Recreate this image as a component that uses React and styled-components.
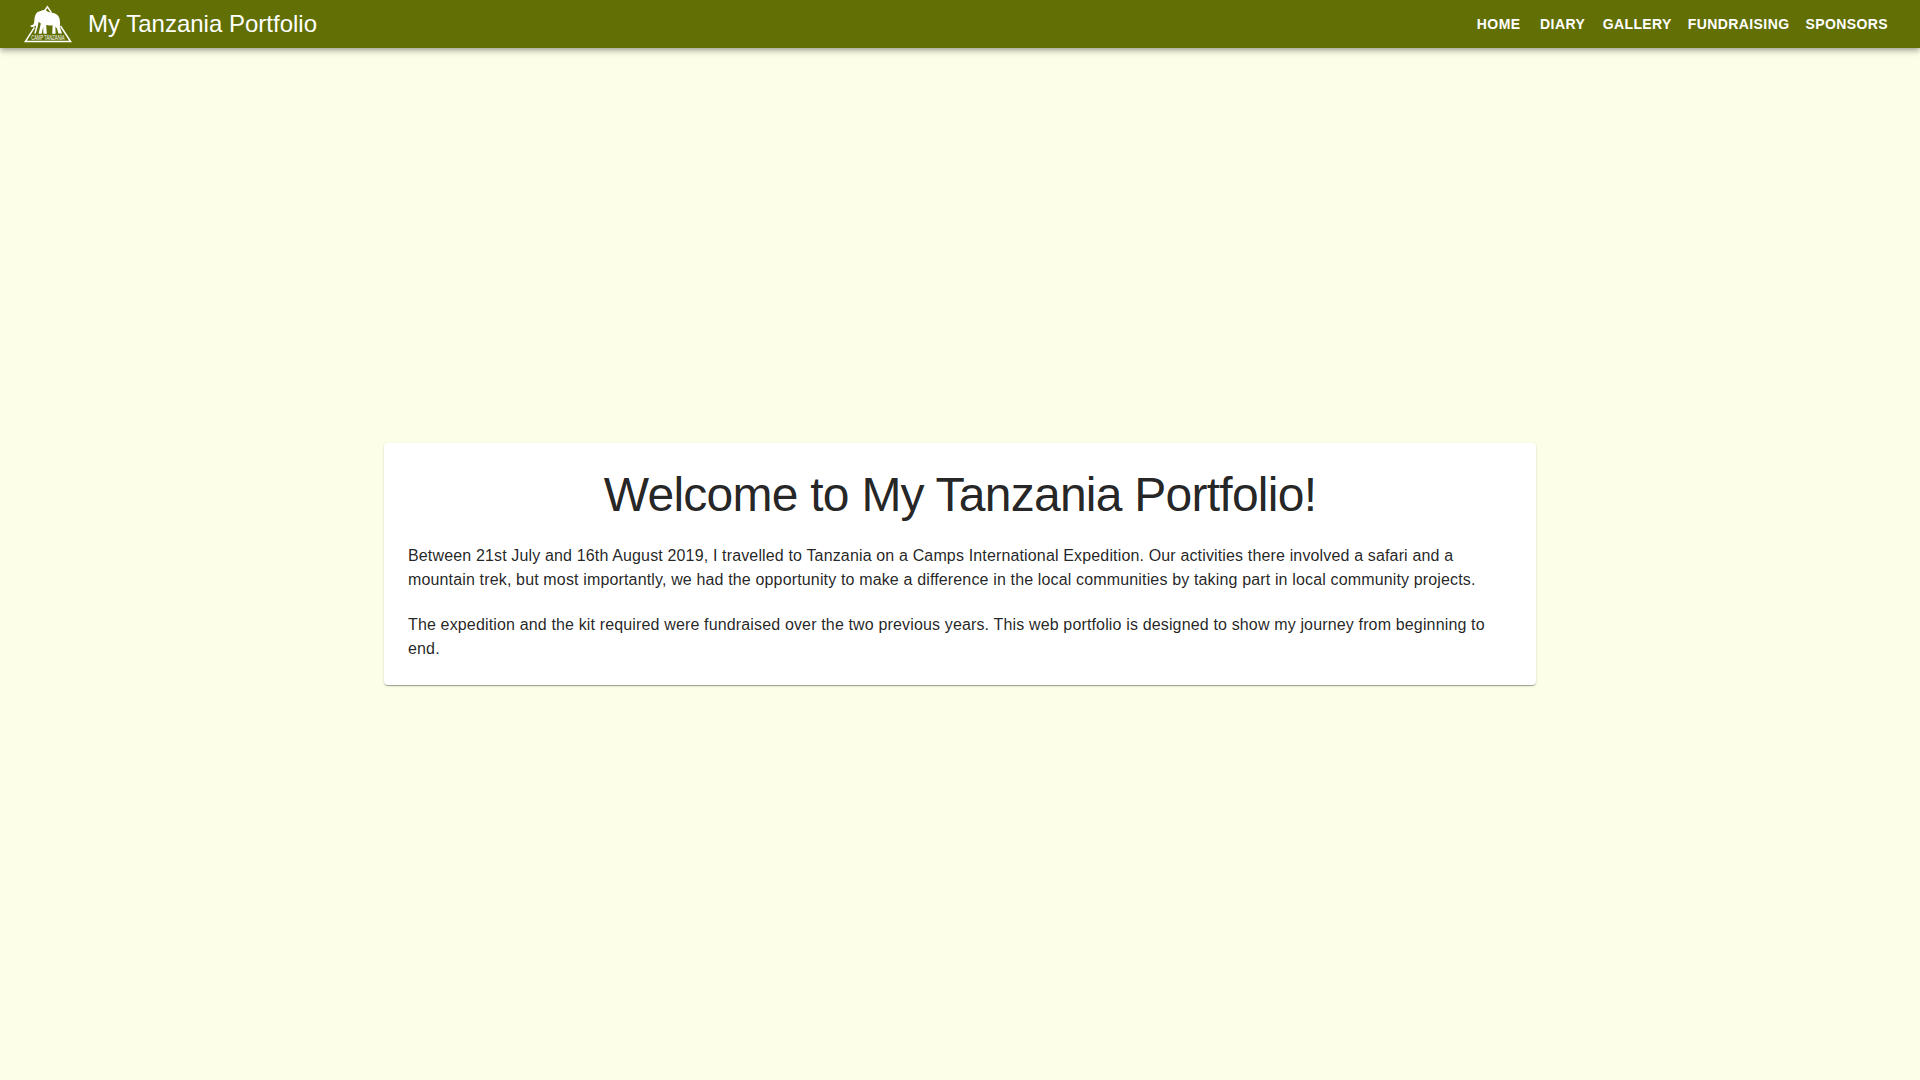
import React from "react";
import styled, { createGlobalStyle } from "styled-components";

const GlobalStyle = createGlobalStyle`
  *, *::before, *::after { box-sizing: border-box; }
  body {
    margin: 0;
    background: #fcfee8;
    color: rgba(0, 0, 0, 0.87);
    font-family: "Liberation Sans", Arial, sans-serif;
  }
`;

const Page = styled.div`
  display: flex;
  flex-direction: column;
  height: 100vh;
`;

const AppBar = styled.header`
  display: flex;
  align-items: center;
  flex: 0 0 48px;
  padding: 0 24px;
  background: #616f05;
  color: #fff;
  box-shadow: 0 2px 4px -1px rgba(0, 0, 0, 0.2), 0 4px 5px 0 rgba(0, 0, 0, 0.14),
    0 1px 10px 0 rgba(0, 0, 0, 0.12);
`;

const LogoMark = styled.svg`
  display: block;
  width: 48px;
  height: 38px;
  margin-right: 16px;
  overflow: visible;
`;

const LogoText = styled.text`
  font-family: "Liberation Sans", Arial, sans-serif;
  font-size: 7.2px;
  font-weight: 400;
  fill: #fff;
`;

const SiteTitle = styled.h1`
  flex: 1;
  margin: 0;
  font-size: 24px;
  font-weight: 400;
  line-height: 32px;
`;

const Nav = styled.nav`
  display: flex;
`;

const NavLink = styled.a`
  min-width: 64px;
  padding: 6px 8px;
  font-size: 14px;
  font-weight: 700;
  line-height: 24.5px;
  letter-spacing: 0.02857em;
  text-align: center;
  text-transform: uppercase;
  color: inherit;
  text-decoration: none;
`;

const Main = styled.main`
  display: flex;
  flex: 1;
  align-items: center;
  justify-content: center;
`;

const Card = styled.section`
  width: 60%;
  padding: 24px;
  border-radius: 4px;
  background: #fff;
  box-shadow: 0 2px 1px -1px rgba(0, 0, 0, 0.2), 0 1px 1px 0 rgba(0, 0, 0, 0.14),
    0 1px 3px 0 rgba(0, 0, 0, 0.12);
`;

const Heading = styled.h2`
  margin: 0 0 21px;
  font-size: 48px;
  font-weight: 400;
  line-height: 56px;
  letter-spacing: -0.01562em;
  text-align: center;
`;

const Paragraph = styled.p`
  margin: 0;
  font-size: 16px;
  line-height: 24px;
  letter-spacing: 0.00938em;

  & + & {
    margin-top: 21px;
  }
`;

const links = ["Home", "Diary", "Gallery", "Fundraising", "Sponsors"];

function Logo() {
  return (
    <LogoMark viewBox="0 0 48 38" role="img" aria-label="Camp Tanzania">
      <path
        d="M20.4 6 L23.4 1.9 L27.4 7.6 M36.5 21 L46.6 36.6 H1.4 L10.4 22.4"
        fill="none"
        stroke="#fff"
        strokeWidth="1.5"
      />
      <path
        d="M6.3 20.6 C8.6 20.2 9.6 19.6 10 18 C10.6 15.6 10.2 13.2 11.2 10.6 C12 7.8 14.2 6.2 16.8 6 C18.6 4.6 21.6 4.6 23.4 6.4 C26.6 7.6 29.6 7.4 32 9 C35 10.8 36 14 36 17.4 L36 22.6 L38 28.4 H34.4 L33 23.6 L31.4 21.6 L31.6 28.8 H28.2 L28.6 20.2 C26.4 20.6 24.2 20.6 22.2 20 L22.8 28.8 H19.4 L19.2 22 L17.6 28.8 H14.6 L16.8 18.4 L14.6 16.8 L14 20.4 L11.8 28.6 H10.2 L12 21.6 L11.6 20.4 C10.4 22 8.4 22.2 6.8 21.8 Z"
        fill="#fff"
      />
      <LogoText x="7.2" y="34.9" textLength="33.4" lengthAdjust="spacingAndGlyphs">
        CAMP TANZANIA
      </LogoText>
    </LogoMark>
  );
}

export default function App() {
  return (
    <Page>
      <GlobalStyle />
      <AppBar>
        <Logo />
        <SiteTitle>My Tanzania Portfolio</SiteTitle>
        <Nav>
          {links.map((label) => (
            <NavLink key={label}>{label}</NavLink>
          ))}
        </Nav>
      </AppBar>
      <Main>
        <Card>
          <Heading>Welcome to My Tanzania Portfolio!</Heading>
          <Paragraph>
            Between 21st July and 16th August 2019, I travelled to Tanzania on a Camps International
            Expedition. Our activities there involved a safari and a mountain trek, but most
            importantly, we had the opportunity to make a difference in the local communities by
            taking part in local community projects.
          </Paragraph>
          <Paragraph>
            The expedition and the kit required were fundraised over the two previous years. This web
            portfolio is designed to show my journey from beginning to end.
          </Paragraph>
        </Card>
      </Main>
    </Page>
  );
}
